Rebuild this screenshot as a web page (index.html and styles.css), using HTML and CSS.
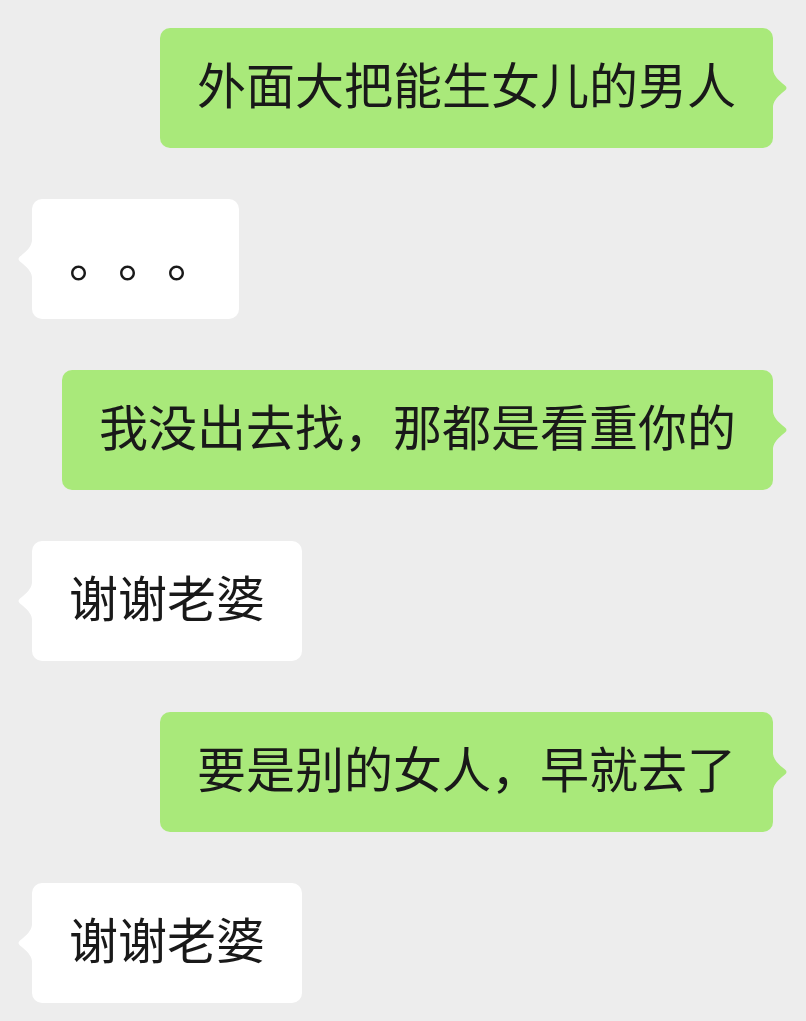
FILE: index.html
```html
<!DOCTYPE html>
<html>

<head>
    <meta charset="utf-8">
    <link rel="stylesheet" href="styles.css">
</head>

<body>
    <div id="chat">
        <div class="msg mine">外面大把能生女儿的男人</div>
        <div class="msg theirs dots">。。。</div>
        <div class="msg mine">我没出去找，那都是看重你的</div>
        <div class="msg theirs">谢谢老婆</div>
        <div class="msg mine">要是别的女人，早就去了</div>
        <div class="msg theirs">谢谢老婆</div>
    </div>
</body>

</html>
```

FILE: styles.css
```css
body {
    margin: 0;
    padding: 0;
    background-color: #ededed;
    font-family: "Noto Sans CJK SC", "Noto Sans", sans-serif;
}

#chat {
    display: flex;
    flex-direction: column;
    gap: 51px;
    padding: 28px 33px 0 32px;
}

.msg {
    position: relative;
    box-sizing: border-box;
    height: 120px;
    display: flex;
    align-items: center;
    padding: 0 37px 12px;
    border-radius: 10px;
    font-size: 49px;
    line-height: 1;
    color: #191919;
    white-space: nowrap;
    text-spacing-trim: space-all;
}

.msg::after {
    content: "";
    position: absolute;
    top: 42px;
    width: 15px;
    height: 36px;
    background-color: inherit;
}

.mine {
    align-self: flex-end;
    background-color: #a9e97a;
}

.mine::after {
    left: 100%;
    clip-path: path('M0 0 C1 6 5 10 12 15.5 Q15 18 12 20.5 C5 26 1 30 0 36 Z');
}

.theirs {
    align-self: flex-start;
    background-color: #fff;
}

.theirs::after {
    right: 100%;
    clip-path: path('M15 0 C14 6 10 10 3 15.5 Q0 18 3 20.5 C10 26 14 30 15 36 Z');
}

.dots {
    padding-right: 23px;
    padding-bottom: 8px;
}
```
